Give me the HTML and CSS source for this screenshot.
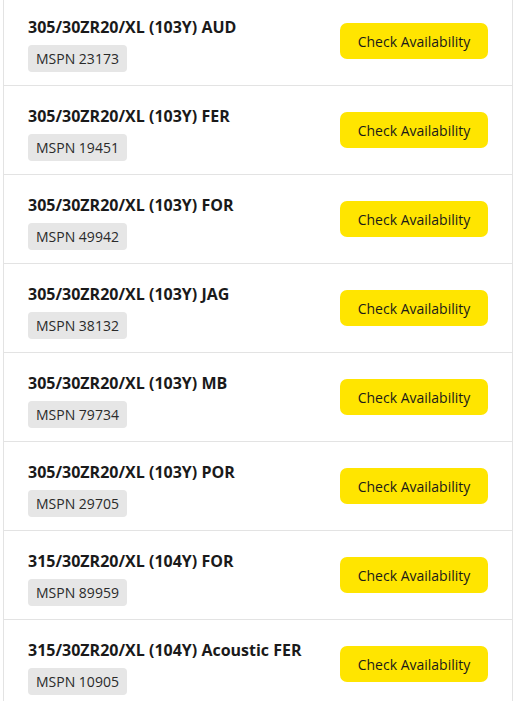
FILE: index.html
```html
<!DOCTYPE html>
<html lang="en">
<head>
<meta charset="utf-8">
<title>Tyre sizes</title>
<link rel="stylesheet" href="styles.css">
</head>
<body>
<ul class="list">
  <li class="row">
    <div class="info"><div class="title">305/30ZR20/XL (103Y) AUD</div><span class="badge">MSPN 23173</span></div>
    <button class="btn">Check Availability</button>
  </li>
  <li class="row">
    <div class="info"><div class="title">305/30ZR20/XL (103Y) FER</div><span class="badge">MSPN 19451</span></div>
    <button class="btn">Check Availability</button>
  </li>
  <li class="row">
    <div class="info"><div class="title">305/30ZR20/XL (103Y) FOR</div><span class="badge">MSPN 49942</span></div>
    <button class="btn">Check Availability</button>
  </li>
  <li class="row">
    <div class="info"><div class="title">305/30ZR20/XL (103Y) JAG</div><span class="badge">MSPN 38132</span></div>
    <button class="btn">Check Availability</button>
  </li>
  <li class="row">
    <div class="info"><div class="title">305/30ZR20/XL (103Y) MB</div><span class="badge">MSPN 79734</span></div>
    <button class="btn">Check Availability</button>
  </li>
  <li class="row">
    <div class="info"><div class="title">305/30ZR20/XL (103Y) POR</div><span class="badge">MSPN 29705</span></div>
    <button class="btn">Check Availability</button>
  </li>
  <li class="row">
    <div class="info"><div class="title">315/30ZR20/XL (104Y) FOR</div><span class="badge">MSPN 89959</span></div>
    <button class="btn">Check Availability</button>
  </li>
  <li class="row">
    <div class="info"><div class="title">315/30ZR20/XL (104Y) Acoustic FER</div><span class="badge">MSPN 10905</span></div>
    <button class="btn">Check Availability</button>
  </li>
</ul>
</body>
</html>
```
FILE: styles.css
```css
html, body {
  margin: 0;
  padding: 0;
  background: #fff;
}
body {
  font-family: "Open Sans", "Liberation Sans", sans-serif;
  color: #1a1a1a;
}
.list {
  list-style: none;
  margin: -3px 0 0 3px;
  padding: 0;
  width: 510px;
  box-sizing: border-box;
  border-left: 1px solid #e3e3e3;
  border-right: 1px solid #e3e3e3;
}
.row {
  display: flex;
  align-items: center;
  justify-content: space-between;
  height: 89px;
  box-sizing: border-box;
  padding: 0 24px;
  border-bottom: 1px solid #e3e3e3;
}
.info {
  display: flex;
  flex-direction: column;
  align-items: flex-start;
  gap: 7px;
  padding-top: 6px;
}
.title {
  font-size: 16px;
  font-weight: 700;
  line-height: 22px;
  color: #1a1a1a;
}
.badge {
  display: inline-block;
  background: #e6e6e6;
  border-radius: 4px;
  font-size: 14px;
  line-height: 27px;
  height: 27px;
  padding: 0 8px;
  color: #2a2a2a;
}
.btn {
  width: 148px;
  height: 36px;
  border: none;
  border-radius: 7px;
  background: #ffe500;
  font-family: "Open Sans", "Liberation Sans", sans-serif;
  font-size: 14px;
  color: #1a1a1a;
  padding: 0;
  cursor: pointer;
}
```
